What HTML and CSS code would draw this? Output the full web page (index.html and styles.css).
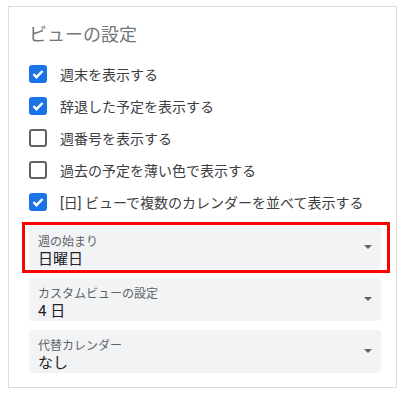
FILE: index.html
```html
<!DOCTYPE html>
<html lang="ja">
<head>
  <meta charset="UTF-8" />
  <meta name="viewport" content="width=device-width, initial-scale=1.0" />
  <title>ビューの設定</title>
  <link rel="stylesheet" href="styles.css">
</head>
<body>
  <div class="card">
    <div class="title">ビューの設定</div>

    <div class="options">
      <label class="option">
        <span class="box checked"><svg viewBox="0 0 18 18"><path d="M4.5 9.2l3 3 6-6.2" /></svg></span>
        <span class="text">週末を表示する</span>
      </label>
      <label class="option">
        <span class="box checked"><svg viewBox="0 0 18 18"><path d="M4.5 9.2l3 3 6-6.2" /></svg></span>
        <span class="text">辞退した予定を表示する</span>
      </label>
      <label class="option">
        <span class="box"></span>
        <span class="text">週番号を表示する</span>
      </label>
      <label class="option">
        <span class="box"></span>
        <span class="text">過去の予定を薄い色で表示する</span>
      </label>
      <label class="option">
        <span class="box checked"><svg viewBox="0 0 18 18"><path d="M4.5 9.2l3 3 6-6.2" /></svg></span>
        <span class="text">[日] ビューで複数のカレンダーを並べて表示する</span>
      </label>
    </div>

    <div class="highlight">
      <div class="select">
        <div class="select-label">週の始まり</div>
        <div class="select-value">日曜日</div>
        <span class="arrow"></span>
      </div>
    </div>

    <div class="select">
      <div class="select-label">カスタムビューの設定</div>
      <div class="select-value">4 日</div>
      <span class="arrow"></span>
    </div>

    <div class="select">
      <div class="select-label">代替カレンダー</div>
      <div class="select-value">なし</div>
      <span class="arrow"></span>
    </div>
  </div>
</body>
</html>
```

FILE: styles.css
```css
body {
  margin: 6px 8px;
  background: #fff;
  font-family: Roboto, "Noto Sans CJK JP", sans-serif;
  color: #3c4043;
}
.card {
  width: 389px;
  box-sizing: border-box;
  border: 1px solid #dadce0;
  padding: 16px 15px 14px 20px;
}
.title {
  font-size: 18px;
  line-height: 24px;
  color: #70757a;
  margin-bottom: 11px;
}
.options {
  display: flex;
  flex-direction: column;
}
.option {
  display: flex;
  align-items: center;
  height: 32px;
  gap: 13px;
}
.box {
  width: 18px;
  height: 18px;
  box-sizing: border-box;
  border: 2px solid #5f6368;
  border-radius: 3px;
  flex: none;
}
.box.checked {
  background: #1a73e8;
  border: none;
}
.box svg {
  display: block;
  width: 18px;
  height: 18px;
}
.box svg path {
  fill: none;
  stroke: #fff;
  stroke-width: 2.4;
}
.text {
  font-size: 14px;
  color: #3c4043;
}
.highlight {
  border: 3px solid #ff0000;
  margin: 4px -9px 5px -7px;
  padding: 1px 6px 1px 4px;
}
.select {
  position: relative;
  height: 43px;
  box-sizing: border-box;
  padding: 8px 0 0 9px;
  background: #f1f3f4;
  border-radius: 4px;
  margin-bottom: 9px;
}
.highlight .select {
  margin-bottom: 0;
}
.select:last-child {
  margin-bottom: 0;
}
.select-label {
  font-size: 12px;
  line-height: 16px;
  color: #5f6368;
}
.select-value {
  font-size: 15px;
  line-height: 18px;
  color: #202124;
}
.arrow {
  position: absolute;
  right: 9px;
  top: 19px;
  border-left: 4px solid transparent;
  border-right: 4px solid transparent;
  border-top: 4px solid #5f6368;
}
```
